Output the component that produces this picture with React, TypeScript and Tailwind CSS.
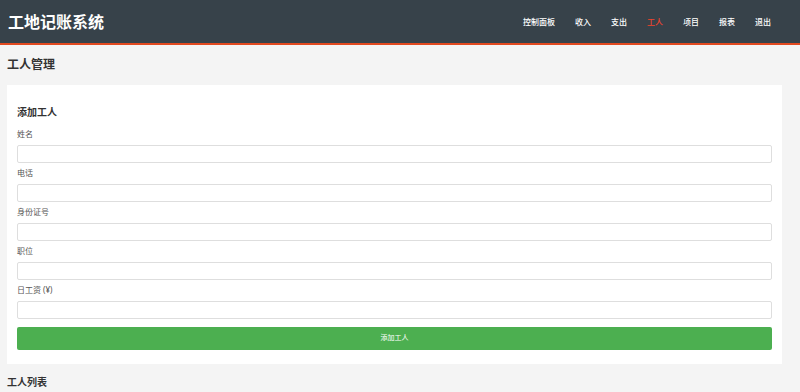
const navItems = ['控制面板', '收入', '支出', '工人', '项目', '报表', '退出']

const fields = ['姓名', '电话', '身份证号', '职位', '日工资 (¥)']

export default function App() {
  return (
    <div
      className="min-h-[392px] bg-[#f4f4f4] text-[#333]"
      style={{ fontFamily: '"Noto Sans", "Noto Sans CJK SC", sans-serif' }}
    >
      {/* Header */}
      <header className="flex h-[45px] items-center border-b-2 border-[#e2491f] bg-[#37424a] pl-[8px] pr-[29px]">
        <h1 className="text-[16px] font-bold leading-none text-white">工地记账系统</h1>
        <nav className="ml-auto flex gap-[20px]">
          {navItems.map((item) => (
            <a
              key={item}
              href="#"
              className={`text-[8px] font-medium leading-none ${item === '工人' ? 'text-[#f0442c]' : 'text-white'}`}
            >
              {item}
            </a>
          ))}
        </nav>
      </header>

      <main className="ml-[7px] mr-[18px] pt-[10px]">
        <h2 className="text-[12px] font-bold leading-[20px]">工人管理</h2>

        {/* Add worker form */}
        <section className="mt-[10px] bg-white px-[10px] pt-[20px] pb-[14px]">
          <h3 className="text-[10px] font-bold leading-[14px]">添加工人</h3>
          <form className="mt-[9px]">
            {fields.map((label, i) => (
              <div key={label} className={i > 0 ? 'mt-[4px]' : ''}>
                <label className="block text-[8px] leading-[12px] text-[#555]">{label}</label>
                <input
                  type="text"
                  className="mt-[5px] block h-[18px] w-full rounded-[2px] border border-[#dedede] bg-white"
                />
              </div>
            ))}
            <button
              type="button"
              className="mt-[8px] flex h-[23px] w-full items-center justify-center rounded-[2px] bg-[#4caf50] text-[7px] text-white"
            >
              添加工人
            </button>
          </form>
        </section>

        <h2 className="mt-[11px] text-[10px] font-bold leading-[14px]">工人列表</h2>
      </main>
    </div>
  )
}
